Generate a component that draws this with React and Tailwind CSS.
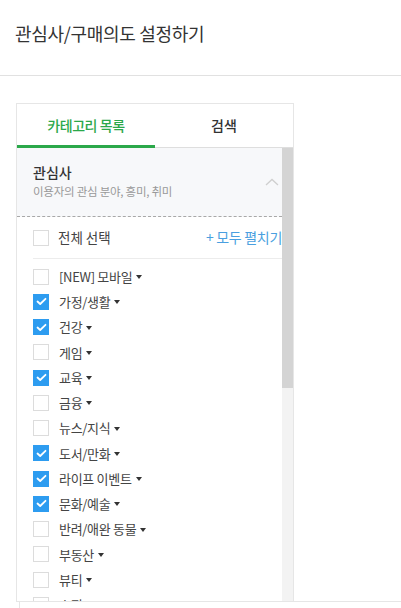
import React from 'react';

const FONT = "font-['Noto_Sans_CJK_KR','Noto_Sans',sans-serif]";

// 관심사 카테고리 목록
const CATEGORIES = [
  { name: '[NEW] 모바일', checked: false },
  { name: '가정/생활', checked: true },
  { name: '건강', checked: true },
  { name: '게임', checked: false },
  { name: '교육', checked: true },
  { name: '금융', checked: false },
  { name: '뉴스/지식', checked: false },
  { name: '도서/만화', checked: true },
  { name: '라이프 이벤트', checked: true },
  { name: '문화/예술', checked: true },
  { name: '반려/애완 동물', checked: false },
  { name: '부동산', checked: false },
  { name: '뷰티', checked: false },
  { name: '쇼핑', checked: false },
];

function Checkbox({ checked }) {
  if (checked) {
    return (
      <span className="flex h-[16px] w-[16px] shrink-0 items-center justify-center bg-[#2d9cf0]">
        <svg width="11" height="9" viewBox="0 0 11 9" fill="none">
          <path d="M1.5 4.5 L4.2 7 L9.5 1.8" stroke="white" strokeWidth="1.8" strokeLinecap="round" strokeLinejoin="round" />
        </svg>
      </span>
    );
  }
  return <span className="h-[16px] w-[16px] shrink-0 border border-[#dcdcdc] bg-white" />;
}

function Caret() {
  return <span className="ml-[4px] mt-[1px] h-0 w-0 border-x-[3px] border-t-[4px] border-x-transparent border-t-[#333]" />;
}

export default function App() {
  return (
    <div className={`relative h-[608px] w-[401px] overflow-hidden bg-white ${FONT}`}>
      {/* 상단 타이틀 */}
      <div className="flex h-[76px] items-center border-b border-[#e1e1e1] px-[15px] pb-[8px]">
        <h1 className="text-[18px] tracking-[-0.3px] text-[#333]">관심사/구매의도 설정하기</h1>
      </div>

      <div className="pl-[16px] pt-[27px]">
        <div className="w-[278px] border border-[#e6e6e6]">
          {/* 탭 */}
          <div className="flex h-[44px] border-b border-[#dedede]">
            <div className="-mb-px flex flex-1 items-center justify-center border-b-[3px] border-[#2ba84a] pt-[2px] text-[14px] font-medium tracking-[-0.4px] text-[#2ba84a]">
              카테고리 목록
            </div>
            <div className="flex flex-1 items-center justify-center text-[14px] font-medium text-[#333]">
              검색
            </div>
          </div>

          <div className="flex h-[453px] overflow-hidden">
            <div className="min-w-0 flex-1">
              {/* 섹션 헤더 */}
              <div className="flex h-[69px] items-center justify-between border-b border-dashed border-[#a8a8a8] bg-[#f7f8fa] pl-[16px]">
                <div className="-mt-[4px]">
                  <div className="text-[14px] leading-[20px] font-medium text-[#333]">관심사</div>
                  <div className="mt-[1px] text-[11.5px] leading-[16px] tracking-[-0.25px] text-[#999]">이용자의 관심 분야, 흥미, 취미</div>
                </div>
                <svg className="mr-[3px]" width="14" height="8" viewBox="0 0 14 8" fill="none">
                  <path d="M1 7 L7 1.5 L13 7" stroke="#cfcfcf" strokeWidth="1.3" />
                </svg>
              </div>

              <div className="pl-[16px]">
                {/* 전체 선택 */}
                <div className="flex h-[42px] items-center justify-between border-b border-[#ececec]">
                  <div className="flex items-center gap-[9px]">
                    <Checkbox checked={false} />
                    <span className="text-[13.5px] text-[#444]">전체 선택</span>
                  </div>
                  <span className="text-[14px] tracking-[-0.3px] text-[#4a9fe0]">+ 모두 펼치기</span>
                </div>

                {/* 카테고리 리스트 */}
                <ul className="pt-[5px]">
                  {CATEGORIES.map((cat) => (
                    <li key={cat.name} className="flex h-[25.25px] items-center">
                      <Checkbox checked={cat.checked} />
                      <span className="ml-[10px] text-[13px] tracking-[-0.3px] text-[#444]">{cat.name}</span>
                      <Caret />
                    </li>
                  ))}
                </ul>
              </div>
            </div>

            {/* 스크롤바 */}
            <div className="w-[11px] shrink-0 bg-[#f3f3f3]">
              <div className="h-[240px] w-full bg-[#d4d4d4]" />
            </div>
          </div>
        </div>
      </div>

      {/* 하단 고정 바 */}
      <div className="absolute left-[19px] right-0 top-[601px] h-[7px] border-l border-t border-[#e6e6e6] bg-white" />
    </div>
  );
}
